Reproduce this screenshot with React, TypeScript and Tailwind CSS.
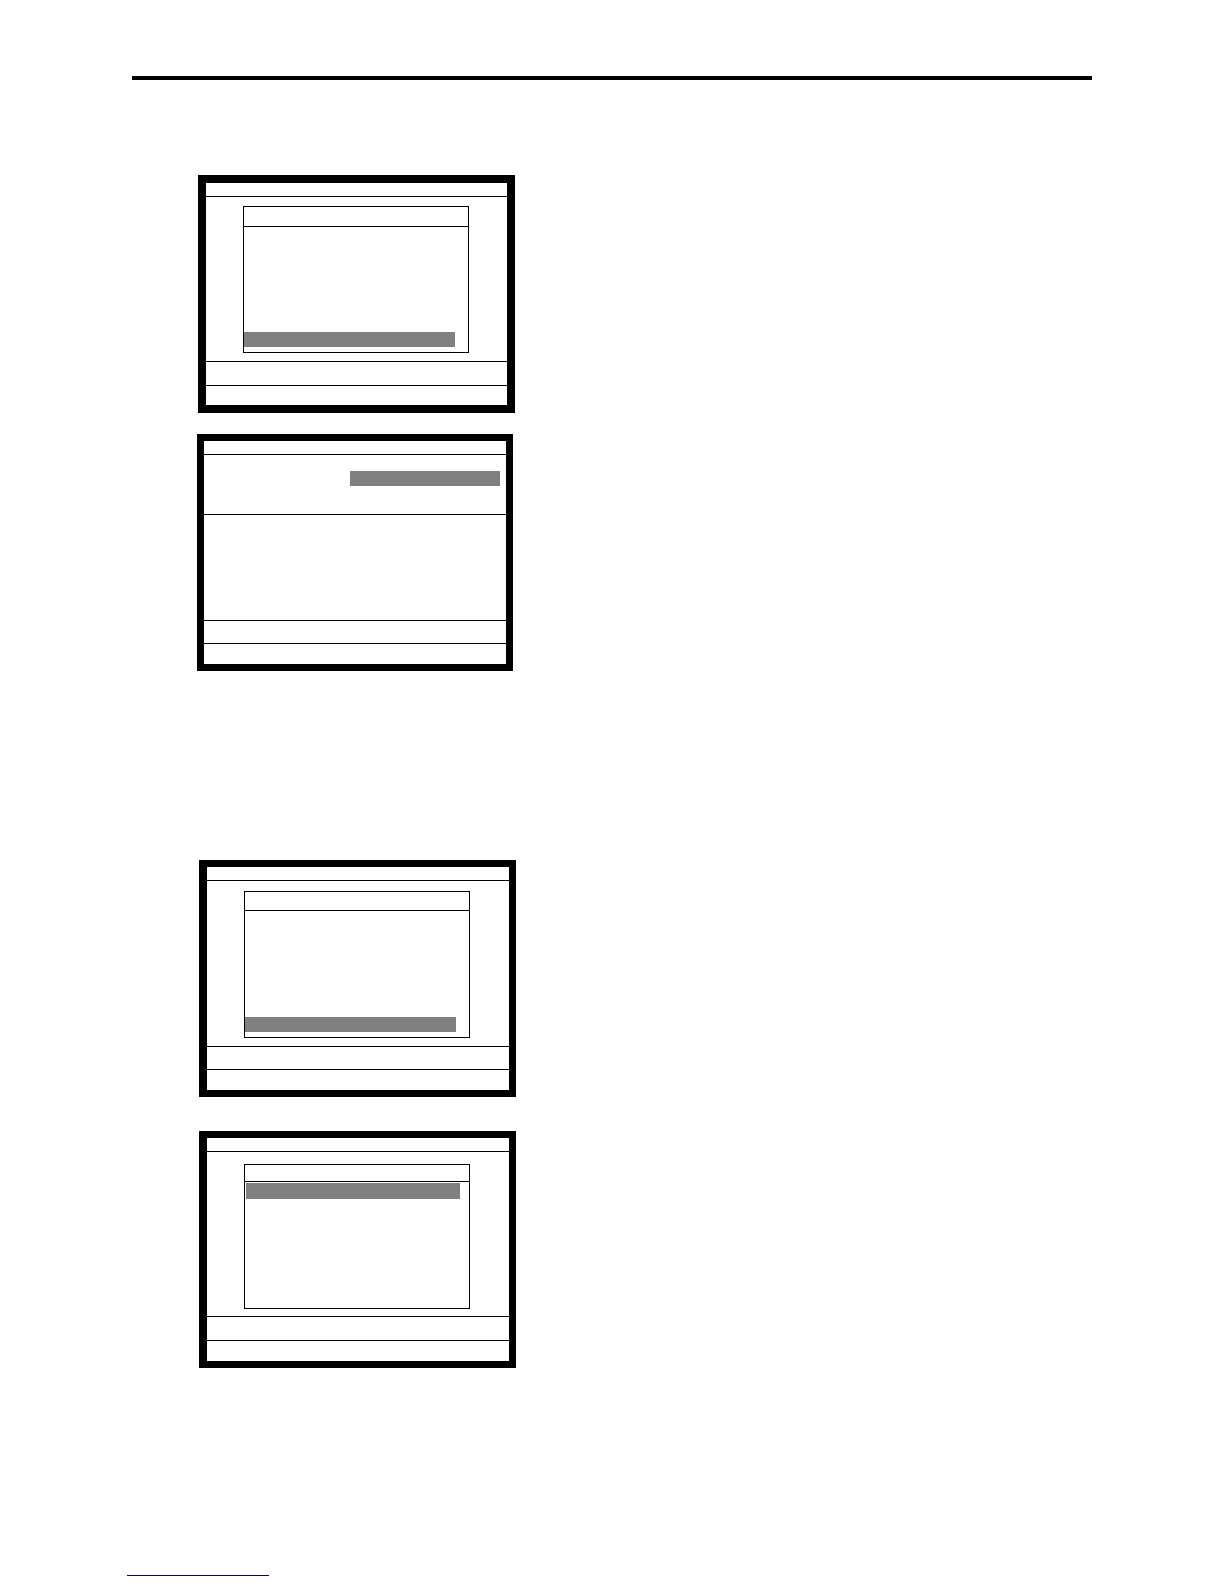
import React from 'react'
import { clsx } from 'clsx'

interface ScreenProps {
  className: string
  promptHeight: string
  statusHeight: string
  children: React.ReactNode
}

// Terminal frame: title strip, body, prompt row, status row
function Screen({ className, promptHeight, statusHeight, children }: ScreenProps) {
  return (
    <section className={clsx('w-full border-black bg-white', className)}>
      <header className="h-3.5 border-b border-black" />
      {children}
      <div className={clsx('border-t border-black', promptHeight)} />
      <footer className={clsx('border-t border-black', statusHeight)} />
    </section>
  )
}

interface MenuProps {
  className: string
  titleHeight: string
  listClassName: string
  highlightClassName: string
}

function Menu({ className, titleHeight, listClassName, highlightClassName }: MenuProps) {
  return (
    <div className={clsx('ml-[37px] w-full max-w-[226px] flex flex-col border border-black', className)}>
      <div className={clsx('border-b border-black', titleHeight)} />
      <div className={clsx('flex-1 flex flex-col', listClassName)}>
        <Highlight className={highlightClassName} />
      </div>
    </div>
  )
}

function Highlight({ className }: { className: string }) {
  return <div className={clsx('w-full bg-[#808080]', className)} />
}

export default function App() {
  return (
    <main className="bg-white px-[132px] pt-[76px] pb-2">
      <hr className="h-1 border-0 bg-black" />

      <div className="mt-[95px] flex flex-col gap-[21px]">
        <Screen className="ml-[66px] max-w-[317px] border-8" promptHeight="h-6" statusHeight="h-5">
          <div className="h-[164px] pt-[9px]">
            <Menu
              className="h-[147px]"
              titleHeight="h-5"
              listClassName="justify-end pb-[5px]"
              highlightClassName="h-[15px] max-w-[211px]"
            />
          </div>
        </Screen>

        <Screen className="ml-[65px] max-w-[316px] border-[7px]" promptHeight="h-[23px]" statusHeight="h-[21px]">
          <div className="flex h-[60px] justify-end border-b border-black pt-4 pr-1.5">
            <Highlight className="h-[15px] max-w-[150px]" />
          </div>
          <div className="h-[105px]" />
        </Screen>
      </div>

      <div className="mt-[189px] flex flex-col gap-[34px]">
        <Screen className="ml-[67px] max-w-[317px] border-[7px] border-l-8" promptHeight="h-[23px]" statusHeight="h-[21px]">
          <div className="h-[165px] pt-2.5">
            <Menu
              className="h-[147px]"
              titleHeight="h-[19px]"
              listClassName="justify-end pb-[5px]"
              highlightClassName="h-[15px] max-w-[211px]"
            />
          </div>
        </Screen>

        <Screen className="ml-[67px] max-w-[317px] border-[7px] border-l-8" promptHeight="h-6" statusHeight="h-[21px]">
          <div className="h-[164px] pt-3">
            <Menu
              className="h-[145px]"
              titleHeight="h-[17px]"
              listClassName="pt-px pl-px"
              highlightClassName="h-4 max-w-[214px]"
            />
          </div>
        </Screen>
      </div>

      <hr className="-ml-[5px] mt-[207px] h-px w-[142px] border-0 bg-[#000080]" />
    </main>
  )
}
